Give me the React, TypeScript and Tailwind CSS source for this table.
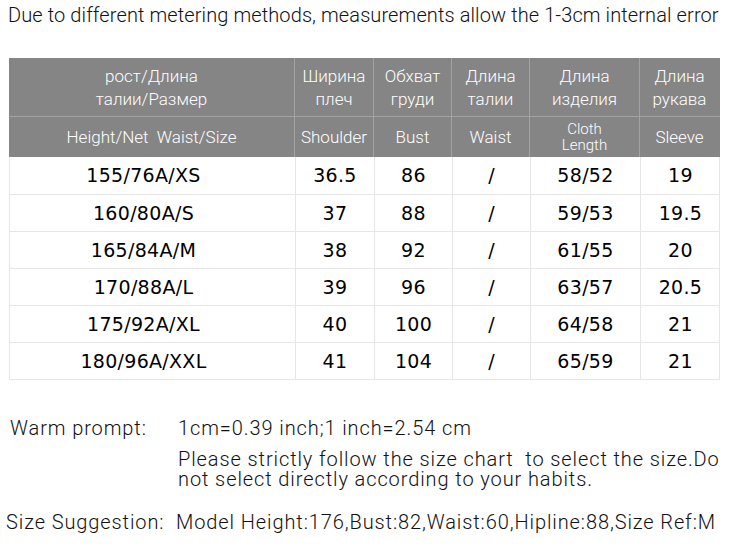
const rows = [
  ["155/76A/XS", "36.5", "86", "/", "58/52", "19"],
  ["160/80A/S", "37", "88", "/", "59/53", "19.5"],
  ["165/84A/M", "38", "92", "/", "61/55", "20"],
  ["170/88A/L", "39", "96", "/", "63/57", "20.5"],
  ["175/92A/XL", "40", "100", "/", "64/58", "21"],
  ["180/96A/XXL", "41", "104", "/", "65/59", "21"],
]

const ru = [
  ["рост/Длина", "талии/Размер"],
  ["Ширина", "плеч"],
  ["Обхват", "груди"],
  ["Длина", "талии"],
  ["Длина", "изделия"],
  ["Длина", "рукава"],
]

const en = ["Height/Net  Waist/Size", "Shoulder", "Bust", "Waist", null, "Sleeve"]

const cols = "grid grid-cols-[285px_79px_78px_78px_110px_80px]"

export default function App() {
  return (
    <div className="w-[730px] h-[547px] bg-white text-[#222] font-['Roboto',sans-serif] overflow-hidden">
      {/* note */}
      <p className="pt-[3px] pl-[8px] text-[20px] font-light leading-[24px] tracking-[0.1px] text-[#111] whitespace-nowrap">
        Due to different metering methods, measurements allow the 1-3cm internal error
      </p>

      {/* size table */}
      <div className="ml-[9px] mt-[31px] w-[711px]">
        <div className="bg-[#858585] text-white font-light text-[17px] leading-[23px]">
          <div className={cols + " h-[59px] border-b border-[#a3a3a3]"}>
            {ru.map((c, i) => (
              <div key={i} className={"flex flex-col items-center justify-center pt-[2px] " + (i > 0 ? "border-l border-[#a3a3a3]" : "")}>
                <span>{c[0]}</span>
                <span>{c[1]}</span>
              </div>
            ))}
          </div>
          <div className={cols + " h-[40px]"}>
            {en.map((c, i) => (
              <div key={i} className={"flex items-center justify-center whitespace-pre " + (i > 0 ? "border-l border-[#a3a3a3]" : "")}>
                {c ?? (
                  <span className="flex flex-col items-center text-[15px] leading-[16px]">
                    <span>Cloth</span>
                    <span>Length</span>
                  </span>
                )}
              </div>
            ))}
          </div>
        </div>
        <div className="border-x border-b border-[#e6e6e6] font-['DejaVu_Sans',sans-serif] text-[19px] text-black">
          {rows.map((r, ri) => (
            <div key={ri} className={cols + " h-[37px] " + (ri > 0 ? "border-t border-[#e6e6e6]" : "")}>
              {r.map((c, i) => (
                <div key={i} className={"flex items-center justify-center tracking-[0.3px] " + (i > 0 ? "border-l border-[#e6e6e6]" : "pr-[18px]")}>
                  {c}
                </div>
              ))}
            </div>
          ))}
        </div>
      </div>

      {/* tips */}
      <div className="mt-[38px] text-[20px] font-light text-[#111] leading-[20px] tracking-[0.9px]">
        <div className="flex whitespace-nowrap">
          <span className="pl-[10px] w-[178px] shrink-0">Warm prompt:</span>
          <span>1cm=0.39 inch;1 inch=2.54 cm</span>
        </div>
        <p className="ml-[178px] mt-[11px] w-[548px]">
          Please strictly follow the size chart&nbsp; to select the size.Do not select directly according to your habits.
        </p>
        <div className="flex mt-[23px] whitespace-nowrap">
          <span className="pl-[6px] w-[176px] shrink-0">Size Suggestion:</span>
          <span>Model Height:176,Bust:82,Waist:60,Hipline:88,Size Ref:M</span>
        </div>
      </div>
    </div>
  )
}
